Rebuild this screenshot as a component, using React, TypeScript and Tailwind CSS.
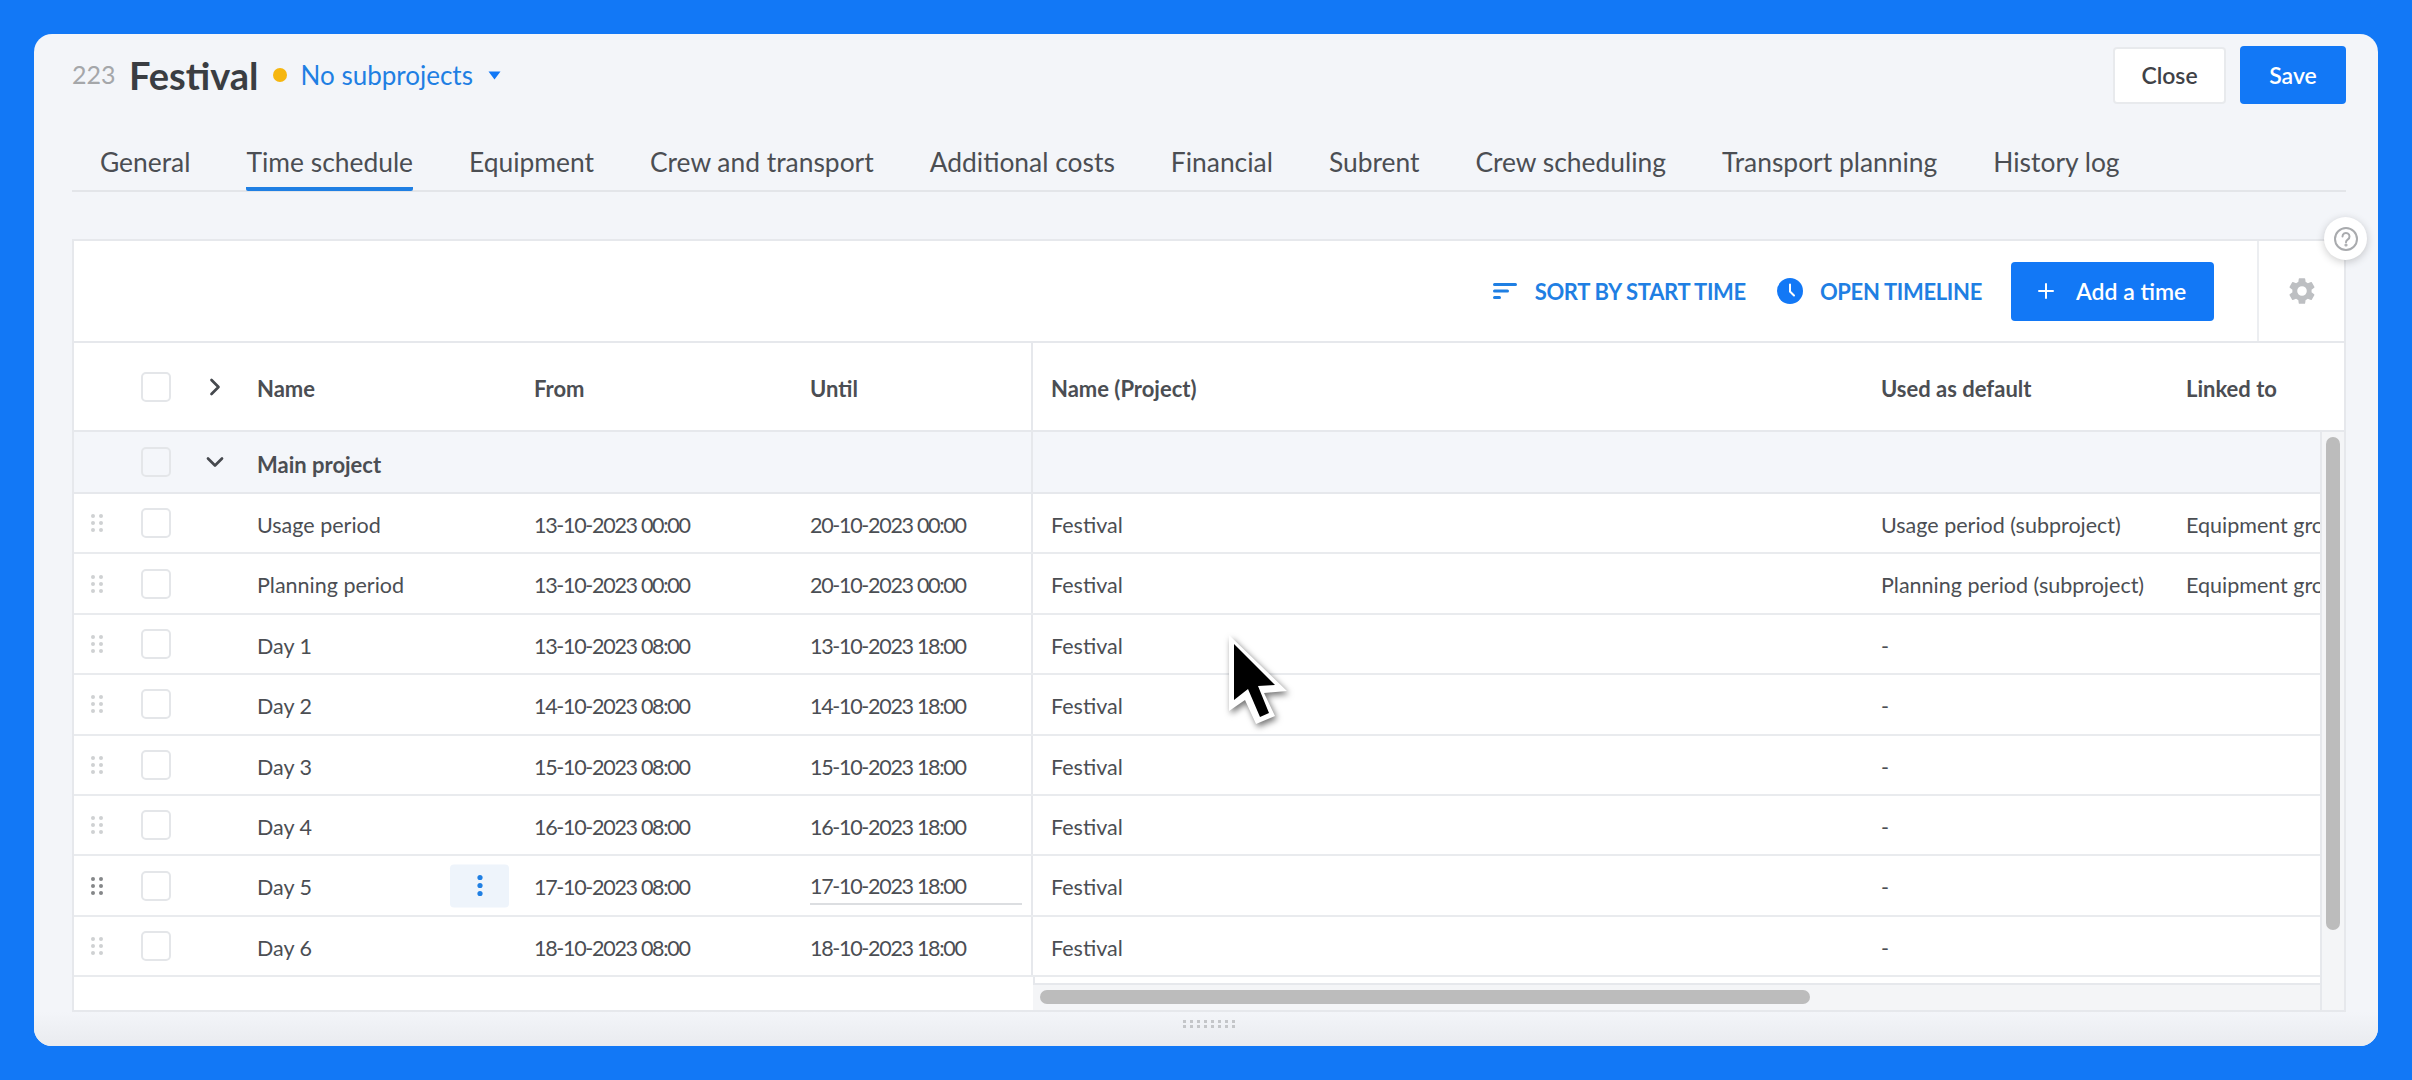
import { Plus, ChevronRight, ChevronDown } from 'lucide-react';

const tabs = ['General', 'Time schedule', 'Equipment', 'Crew and transport', 'Additional costs', 'Financial', 'Subrent', 'Crew scheduling', 'Transport planning', 'History log'];

const rows = [
    { name: 'Usage period', from: '13-10-2023 00:00', until: '20-10-2023 00:00', used: 'Usage period (subproject)', linked: 'Equipment groups' },
    { name: 'Planning period', from: '13-10-2023 00:00', until: '20-10-2023 00:00', used: 'Planning period (subproject)', linked: 'Equipment groups' },
    { name: 'Day 1', from: '13-10-2023 08:00', until: '13-10-2023 18:00', used: '-', linked: '' },
    { name: 'Day 2', from: '14-10-2023 08:00', until: '14-10-2023 18:00', used: '-', linked: '' },
    { name: 'Day 3', from: '15-10-2023 08:00', until: '15-10-2023 18:00', used: '-', linked: '' },
    { name: 'Day 4', from: '16-10-2023 08:00', until: '16-10-2023 18:00', used: '-', linked: '' },
    { name: 'Day 5', from: '17-10-2023 08:00', until: '17-10-2023 18:00', used: '-', linked: '', hovered: true },
    { name: 'Day 6', from: '18-10-2023 08:00', until: '18-10-2023 18:00', used: '-', linked: '' },
];

function Checkbox() {
    return <div className="w-[30px] h-[30px] rounded-[5px] border-2 border-[#e4e6e9]" />;
}

function DragHandle({ dark }: { dark?: boolean }) {
    return (
        <svg width="12" height="18" viewBox="0 0 12 18" className={dark ? 'text-[#858789]' : 'text-[#cfd1d3]'} fill="currentColor">
            <circle cx="2" cy="2" r="2" />
            <circle cx="10" cy="2" r="2" />
            <circle cx="2" cy="9" r="2" />
            <circle cx="10" cy="9" r="2" />
            <circle cx="2" cy="16" r="2" />
            <circle cx="10" cy="16" r="2" />
        </svg>
    );
}

export default function App() {
    return (
        <div className="w-[2412px] h-[1080px] bg-[#1278f6] p-[34px] font-['Lato','Noto_Sans',sans-serif] text-[#4b4e53] overflow-hidden">
            <div className="relative h-[1012px] bg-[#f3f5f9] rounded-[18px] pl-[38px] pr-[32px] pt-[11px] flex flex-col">
                {/* Title row */}
                <div className="flex items-center justify-between h-[60px] shrink-0">
                    <div className="flex items-center">
                        <span className="text-[25px] text-[#a5a7aa] w-[57px]">223</span>
                        <span className="text-[38px] font-bold text-[#3a3d42]">Festival</span>
                        <span className="w-[14px] h-[14px] rounded-full bg-[#f6b60f] ml-[14px]" />
                        <span className="text-[26px] text-[#1f7fe3] ml-[14px]">No subprojects</span>
                        <svg width="13" height="9" viewBox="0 0 13 9" className="ml-[15px]">
                            <path d="M0.5 0.5H12.5L6.5 8.5Z" fill="#1278f6" />
                        </svg>
                    </div>
                    <div className="flex items-center gap-[14px]">
                        <button className="w-[113px] h-[57px] bg-white border-2 border-[#e8eaed] rounded-[4px] text-[23px] font-semibold text-[#3f4247]">Close</button>
                        <button className="w-[106px] h-[58px] bg-[#1278f6] rounded-[4px] text-[23px] font-semibold text-white">Save</button>
                    </div>
                </div>

                {/* Tabs */}
                <div className="flex gap-[56px] pl-[28px] h-[57px] mt-[30px] border-b-2 border-[#e3e5e9] shrink-0">
                    {tabs.map(tab => (
                        <div key={tab} className={`h-[56px] flex items-center text-[26.4px] whitespace-nowrap ${tab === 'Time schedule' ? 'border-b-[4px] border-[#1f7fe3] rounded-b-[2px] pt-[4px]' : ''}`}>
                            {tab}
                        </div>
                    ))}
                </div>

                {/* Table card */}
                <div className="mt-[47px] h-[773px] bg-white border-2 border-[#e6e8ec] flex flex-col shrink-0 overflow-hidden">
                    <div className="h-[102px] shrink-0 flex items-center justify-end border-b-2 border-[#e6e8ec]">
                        <div className="flex items-center text-[#1f7fe3] text-[22px] font-bold tracking-[-0.33px]">
                            <svg width="24" height="16" viewBox="0 0 24 16" className="mr-[18px]" fill="#1f7fe3">
                                <rect x="0" y="0" width="24" height="3" rx="1.5" />
                                <rect x="0" y="6.5" width="16" height="3" rx="1.5" />
                                <rect x="0" y="13" width="8" height="3" rx="1.5" />
                            </svg>
                            <span>SORT BY START TIME</span>
                            <svg width="26" height="26" viewBox="0 0 26 26" className="ml-[31px] mr-[17px]">
                                <circle cx="13" cy="13" r="13" fill="#1278f6" />
                                <path d="M13 6.5V13.5L17 17.5" stroke="#fff" strokeWidth="2" fill="none" strokeLinecap="round" />
                            </svg>
                            <span>OPEN TIMELINE</span>
                        </div>
                        <button className="ml-[29px] w-[203px] h-[59px] bg-[#1278f6] rounded-[4px] flex items-center pl-[23px] text-white text-[23px] font-semibold">
                            <Plus size={24} strokeWidth={2} />
                            <span className="ml-[18px]">Add a time</span>
                        </button>
                        <div className="ml-[43px] w-[87px] h-full border-l-2 border-[#eceef1] flex items-center justify-center text-[#bdbfc2]">
                            <svg width="32" height="32" viewBox="0 0 24 24" fill="currentColor">
                                <path d="M19.14 12.94c.04-.3.06-.61.06-.94s-.02-.64-.07-.94l2.03-1.58a.5.5 0 0 0 .12-.64l-1.92-3.32a.5.5 0 0 0-.61-.22l-2.39.96a7 7 0 0 0-1.62-.94l-.36-2.54a.48.48 0 0 0-.48-.41h-3.84a.48.48 0 0 0-.47.41l-.36 2.54c-.59.24-1.13.56-1.62.94l-2.39-.96a.5.5 0 0 0-.6.22L2.7 8.84a.48.48 0 0 0 .12.64l2.03 1.58c-.05.3-.09.63-.09.94s.02.64.07.94l-2.03 1.58a.5.5 0 0 0-.12.64l1.92 3.32c.12.22.37.29.59.22l2.39-.96c.5.38 1.03.7 1.62.94l.36 2.54c.05.24.24.41.48.41h3.84c.24 0 .44-.17.47-.41l.36-2.54c.59-.24 1.13-.56 1.62-.94l2.39.96c.22.08.47 0 .59-.22l1.92-3.32a.48.48 0 0 0-.12-.64zM12 15.6a3.6 3.6 0 1 1 0-7.2 3.6 3.6 0 0 1 0 7.2z" />
                            </svg>
                        </div>
                    </div>

                    {/* Column headers */}
                    <div className="h-[89px] shrink-0 flex border-b-2 border-[#e6e8ec] text-[22px] font-bold text-[#4b4e53]">
                        <div className="w-[959px] shrink-0 border-r-2 border-[#e6e8ec] grid grid-cols-[67px_30px_86px_277px_276px_1fr] items-center">
                            <div />
                            <Checkbox />
                            <div className="pl-[30px] text-[#46494e]"><ChevronRight size={28} strokeWidth={2.3} /></div>
                            <div className="pt-[4px]">Name</div>
                            <div className="pt-[4px]">From</div>
                            <div className="pt-[4px]">Until</div>
                        </div>
                        <div className="flex-1 grid grid-cols-[830px_305px_1fr] items-center pl-[18px] whitespace-nowrap">
                            <div className="pt-[4px]">Name (Project)</div>
                            <div className="pt-[4px]">Used as default</div>
                            <div className="pt-[4px]">Linked to</div>
                        </div>
                    </div>

                    <div className="flex-1 flex min-h-0">
                        <div className="flex-1 min-w-0 flex flex-col">
                            {/* Group row */}
                            <div className="h-[62px] shrink-0 flex bg-[#f4f6fa] border-b-2 border-[#e6e8ec] text-[22px] font-bold text-[#4b4e53]">
                                <div className="w-[959px] shrink-0 border-r-2 border-[#e6e8ec] grid grid-cols-[67px_30px_86px_1fr] items-center">
                                    <div />
                                    <Checkbox />
                                    <div className="pl-[30px] text-[#46494e]"><ChevronDown size={28} strokeWidth={2.3} /></div>
                                    <div className="pt-[4px]">Main project</div>
                                </div>
                            </div>

                            {rows.map(row => (
                                <div key={row.name} className="h-[60.4px] shrink-0 flex border-b-2 border-[#e9ebee] text-[21.5px]">
                                    <div className="w-[959px] shrink-0 border-r-2 border-[#e6e8ec] grid grid-cols-[67px_30px_86px_277px_276px_1fr] items-center">
                                        <div className="flex justify-start pl-[17px]"><DragHandle dark={row.hovered} /></div>
                                        <Checkbox />
                                        <div />
                                        <div className="relative pt-[4px]">
                                            {row.name}
                                            {row.hovered && (
                                                <div className="absolute right-[25px] top-1/2 -translate-y-1/2 w-[59px] h-[43px] rounded-[4px] bg-[#eef4fb] flex items-center justify-center">
                                                    <svg width="6" height="22" viewBox="0 0 6 22" fill="#1f7fe3">
                                                        <circle cx="3" cy="3" r="2.6" />
                                                        <circle cx="3" cy="11" r="2.6" />
                                                        <circle cx="3" cy="19" r="2.6" />
                                                    </svg>
                                                </div>
                                            )}
                                        </div>
                                        <div className="pt-[4px] tracking-[-1.3px]">{row.from}</div>
                                        {row.hovered ? (
                                            <div className="h-[36px] mt-[3px] mr-[9px] pt-[2px] border-b-2 border-[#dcdee1] leading-[30px] tracking-[-1.3px]">{row.until}</div>
                                        ) : (
                                            <div className="pt-[4px] tracking-[-1.3px]">{row.until}</div>
                                        )}
                                    </div>
                                    <div className="flex-1 min-w-0 overflow-hidden grid grid-cols-[830px_305px_1fr] items-center pl-[18px] whitespace-nowrap">
                                        <div className="pt-[4px]">Festival</div>
                                        <div className="pt-[4px]">{row.used}</div>
                                        <div className="pt-[4px]">{row.linked}</div>
                                    </div>
                                </div>
                            ))}

                            <div className="flex-1 flex flex-col min-h-0">
                                <div className="h-[6px] shrink-0 ml-[959px] border-l-2 border-[#e6e8ec]" />
                                <div className="flex-1 ml-[959px] bg-[#f4f5f7] border-t-2 border-[#e6e8ec] pl-[7px] pt-[5px]">
                                    <div className="w-[770px] h-[14px] rounded-full bg-[#bcbcbc]" />
                                </div>
                            </div>
                        </div>

                        {/* Vertical scrollbar */}
                        <div className="w-[24px] shrink-0 bg-[#f4f5f7] border-l-2 border-[#e6e8ec] pl-[4px] pt-[5px]">
                            <div className="w-[14px] h-[493px] rounded-full bg-[#bcbcbc]" />
                        </div>
                    </div>
                </div>

                {/* Resize grip */}
                <div className="flex-1 -ml-[38px] -mr-[32px] rounded-b-[18px] bg-linear-to-b from-[#f3f5f9] to-[#e9ebef] flex items-center justify-center pl-[6px] pb-[10px]">
                    <svg width="54" height="10" viewBox="0 0 54 10" fill="#c4c6c9">
                        {[0, 1, 2, 3, 4, 5, 6, 7].map(i => (
                            <g key={i}>
                                <rect x={i * 7 + 1} y="1" width="3" height="3" />
                                <rect x={i * 7 + 1} y="6" width="3" height="3" />
                            </g>
                        ))}
                    </svg>
                </div>

                {/* Help button */}
                <div className="absolute right-[11px] top-[183px] w-[43px] h-[43px] rounded-full bg-white shadow-[0_2px_8px_rgba(0,0,0,0.2)] flex items-center justify-center">
                    <svg width="26" height="26" viewBox="0 0 26 26" fill="none" stroke="#a9abae" strokeWidth="2">
                        <circle cx="13" cy="13" r="11" />
                        <path d="M9.5 10.5a3.5 3.5 0 1 1 5.4 2.9c-1.2.8-1.9 1.4-1.9 2.8" strokeLinecap="round" />
                        <circle cx="13" cy="19" r="0.6" fill="#a9abae" />
                    </svg>
                </div>

                {/* Mouse pointer */}
                <svg width="62" height="92" viewBox="0 0 62 92" className="absolute left-[1193px] top-[599px] drop-shadow-[2px_3px_3px_rgba(0,0,0,0.55)]">
                    <path d="M2 2L60 58L37 60L48 83L29 91L18 67L2 78Z" fill="#fff" />
                    <path d="M7 11L48 52L31 53L42 80L33 84L21 56L7 67Z" fill="#000" />
                </svg>
            </div>
        </div>
    );
}
